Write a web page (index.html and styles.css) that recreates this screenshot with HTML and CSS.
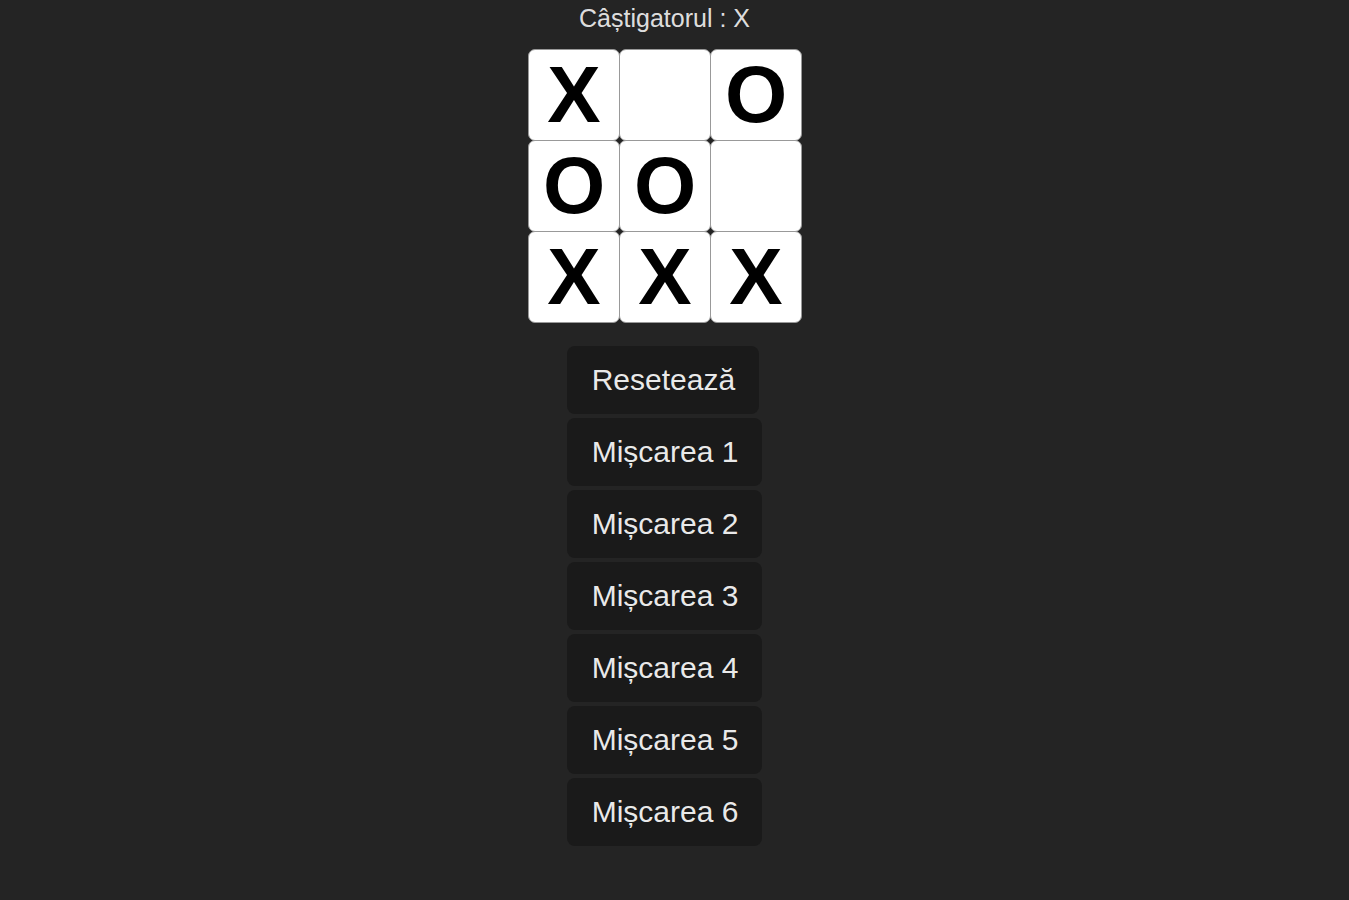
FILE: index.html
```html
<!DOCTYPE html>
<html lang="ro">
<head>
<meta charset="utf-8">
<title>Tic Tac Toe</title>
<link rel="stylesheet" href="styles.css">
</head>
<body>
<div class="app">
  <div class="status">Câștigatorul : X</div>
  <div class="board">
    <div class="board-row">
      <button class="square">X</button>
      <button class="square"></button>
      <button class="square">O</button>
    </div>
    <div class="board-row">
      <button class="square">O</button>
      <button class="square">O</button>
      <button class="square"></button>
    </div>
    <div class="board-row">
      <button class="square">X</button>
      <button class="square">X</button>
      <button class="square">X</button>
    </div>
  </div>
  <ol class="moves">
    <li><button class="move">Resetează</button></li>
    <li><button class="move">Mișcarea 1</button></li>
    <li><button class="move">Mișcarea 2</button></li>
    <li><button class="move">Mișcarea 3</button></li>
    <li><button class="move">Mișcarea 4</button></li>
    <li><button class="move">Mișcarea 5</button></li>
    <li><button class="move">Mișcarea 6</button></li>
  </ol>
</div>
</body>
</html>
```

FILE: styles.css
```css
html, body {
  margin: 0;
  padding: 0;
  background: #242424;
}

body {
  font-family: "Liberation Sans", Arial, sans-serif;
  color: rgba(255, 255, 255, 0.87);
}

.app {
  display: flex;
  flex-direction: column;
  align-items: center;
  padding-right: 20px;
  padding-top: 4px;
}

.status {
  font-size: 25px;
  line-height: 28px;
  margin-bottom: 18px;
}

.board {
  display: flex;
  flex-direction: column;
}

.board-row {
  display: flex;
}

.square {
  width: 92px;
  height: 92px;
  margin-right: -1px;
  margin-top: -1px;
  padding: 0;
  background: #fff;
  border: 1px solid #999;
  border-radius: 7px;
  font-family: "Liberation Sans", Arial, sans-serif;
  font-weight: bold;
  font-size: 80px;
  line-height: 90px;
  color: #000;
  text-align: center;
}

.moves {
  list-style: none;
  margin: 23px 0 0;
  padding: 0;
  display: flex;
  flex-direction: column;
  align-items: flex-start;
  gap: 4px;
}

.move {
  font-family: "Liberation Sans", Arial, sans-serif;
  font-size: 30px;
  line-height: 34px;
  padding: 17px 24px 17px 25px;
  border: 0;
  border-radius: 8px;
  background: #1a1a1a;
  color: rgba(255, 255, 255, 0.92);
}
```
